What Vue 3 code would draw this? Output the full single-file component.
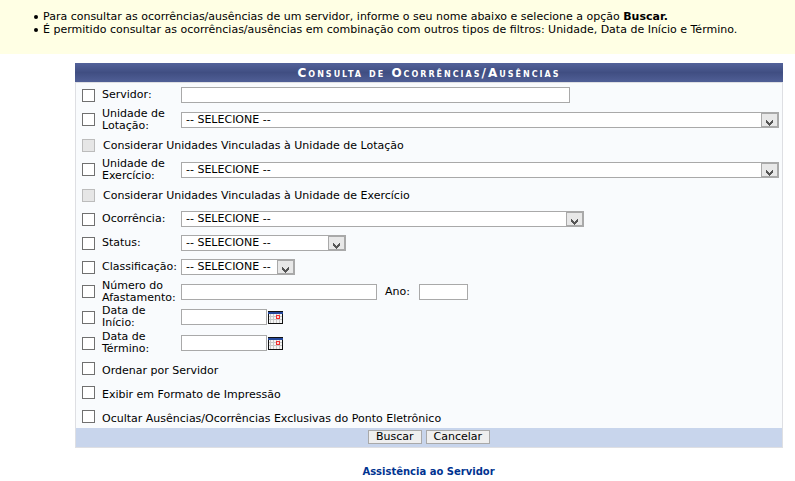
<script setup>
import { reactive } from 'vue'

const form = reactive({
  servidor: '',
  lotacao: '',
  exercicio: '',
  ocorrencia: '',
  status: '',
  classificacao: '',
  numero: '',
  ano: '',
  inicio: '',
  termino: '',
})

const filtros = [
  { id: 'servidor', label: 'Servidor:', type: 'text', size: 'large' },
  { id: 'lotacao', label: 'Unidade de Lotação:', type: 'select', size: 'full', tall: true },
  { id: 'vincLotacao', label: 'Considerar Unidades Vinculadas à Unidade de Lotação', type: 'sub' },
  { id: 'exercicio', label: 'Unidade de Exercício:', type: 'select', size: 'full', tall: true },
  { id: 'vincExercicio', label: 'Considerar Unidades Vinculadas à Unidade de Exercício', type: 'sub' },
  { id: 'ocorrencia', label: 'Ocorrência:', type: 'select', size: 'wide' },
  { id: 'status', label: 'Status:', type: 'select', size: 'medium' },
  { id: 'classificacao', label: 'Classificação:', type: 'select', size: 'small' },
  { id: 'numero', label: 'Número do Afastamento:', type: 'number', size: 'number', tall: true },
  { id: 'inicio', label: 'Data de Início:', type: 'date', size: 'date' },
  { id: 'termino', label: 'Data de Término:', type: 'date', size: 'date' },
  { id: 'ordenar', label: 'Ordenar por Servidor', type: 'option' },
  { id: 'exibir', label: 'Exibir em Formato de Impressão', type: 'option' },
  { id: 'ocultar', label: 'Ocultar Ausências/Ocorrências Exclusivas do Ponto Eletrônico', type: 'option' },
]
</script>

<template>
  <div class="page">
    <div class="info">
      <ul class="info__list">
        <li>Para consultar as ocorrências/ausências de um servidor, informe o seu nome abaixo e selecione a opção <b>Buscar.</b></li>
        <li>É permitido consultar as ocorrências/ausências em combinação com outros tipos de filtros: Unidade, Data de Início e Término.</li>
      </ul>
    </div>

    <form class="panel" @submit.prevent>
      <h1 class="panel__title">Consulta de Ocorrências/Ausências</h1>
      <div class="panel__body">
        <div
          v-for="item in filtros"
          :key="item.id"
          class="row"
          :class="['row_' + item.type, { row_tall: item.tall }]"
        >
          <input :id="'check_' + item.id" type="checkbox" class="check" :disabled="item.type === 'sub'" />
          <label class="label" :for="'check_' + item.id">{{ item.label }}</label>

          <div v-if="item.type === 'select'" class="select" :class="'field_' + item.size">
            <select v-model="form[item.id]" class="select__input" :aria-label="item.label">
              <option value="">-- SELECIONE --</option>
            </select>
            <svg class="select__arrow" viewBox="0 0 18 14" shape-rendering="crispEdges">
              <rect width="18" height="14" fill="#a9a9a9" />
              <rect x="1" y="1" width="15" height="12" fill="#e8e8e8" />
              <path d="M5 7h1v1h1v1h1v1h1v-1h1v-1h1v-1h1v3h-1v1h-1v1h-1v1h-1v-1h-1v-1h-1v-1h-1z" fill="#555" />
            </svg>
          </div>

          <input
            v-else-if="['text', 'number', 'date'].includes(item.type)"
            v-model="form[item.id]"
            type="text"
            class="field"
            :class="'field_' + item.size"
            :aria-label="item.label"
          />

          <template v-if="item.type === 'number'">
            <label class="year" for="ano">Ano:</label>
            <input id="ano" v-model="form.ano" type="text" class="field field_year" />
          </template>

          <button v-if="item.type === 'date'" type="button" class="calendar" aria-label="Calendário">
            <svg width="15" height="13" viewBox="0 0 15 13" shape-rendering="crispEdges">
              <rect width="15" height="13" fill="#111" />
              <rect x="1" y="3" width="13" height="9" fill="#c8c8c8" />
              <rect y="1" width="15" height="2" fill="#24479b" />
              <path d="M1 3h1v9h-1zM3 3h2v9h-2zM6 3h2v9h-2zM9 3h2v9h-2zM12 3h2v9h-2z" fill="#f4f4f4" />
              <path d="M1 5h13v1h-13zM1 8h13v1h-13z" fill="#c8c8c8" />
              <rect x="8" y="4" width="4" height="4" fill="#f03030" />
              <rect x="9" y="5" width="2" height="2" fill="#ffd8d8" />
            </svg>
          </button>
        </div>
      </div>
      <div class="panel__footer">
        <button type="submit" class="button">Buscar</button>
        <button type="button" class="button">Cancelar</button>
      </div>
    </form>

    <div class="back">
      <a class="back__link" href="#">Assistência ao Servidor</a>
    </div>
  </div>
</template>

<style>
body {
  margin: 0;
  background: #fff;
}
</style>

<style scoped>
.page {
  font-family: Verdana, "DejaVu Sans", sans-serif;
  font-size: 11px;
  line-height: 12px;
  color: #000;
}

.info {
  padding: 10px 0 18px;
  background: #ffffe4;
}

.info__list {
  margin: 0;
  padding: 0 0 0 43px;
  line-height: 13px;
  list-style: none;
}

.info__list li::before {
  content: '';
  float: left;
  width: 4px;
  height: 4px;
  margin: 5px 0 0 -9px;
  border-radius: 50%;
  background: #000;
}

.panel {
  margin: 9px 12px 0 75px;
}

.panel__title {
  margin: 0;
  padding-top: 1px;
  background: linear-gradient(#53629a, #404e82 50%, #505f96);
  color: #fff;
  font-size: 12px;
  font-variant: small-caps;
  letter-spacing: 2px;
  line-height: 18px;
  text-align: center;
}

.panel__body {
  border: 1px solid #dedfe3;
  border-bottom: none;
  background: #f9fbfd;
}

.row {
  display: flex;
  align-items: center;
  box-sizing: border-box;
  height: 24px;
  padding: 0 3px 0 6px;
}

.row_tall {
  height: 25px;
}

.row_sub {
  height: 25px;
  padding-top: 2px;
}

.row_date {
  height: 26px;
}

.check {
  appearance: none;
  flex: none;
  box-sizing: border-box;
  width: 13px;
  height: 13px;
  margin: 0 7px 0 0;
  border: 1px solid #707070;
  background: #fff;
}

.check:checked {
  background: #404e82;
}

.check:disabled {
  border-color: #bcbcbc;
  background: #e6e6e6;
}

.label {
  flex: none;
  width: 79px;
}

.row_sub .label,
.row_option .label {
  width: auto;
}

.row_sub .label {
  padding-left: 1px;
}

.row_option .label {
  padding-top: 6px;
}

.field,
.select__input {
  box-sizing: border-box;
  height: 16px;
  margin: 0;
  padding: 0 4px;
  border: 1px solid #a9a9a9;
  border-radius: 0;
  background: #fff;
  color: #000;
  font: inherit;
}

.select {
  position: relative;
  display: flex;
}

.select__input {
  appearance: none;
  width: 100%;
}

.select__arrow {
  position: absolute;
  top: 1px;
  right: 0;
  width: 18px;
  height: 14px;
  pointer-events: none;
}

.field_large {
  width: 389px;
}

.field_full {
  flex: 1;
}

.field_wide {
  width: 403px;
}

.field_medium {
  width: 165px;
}

.field_small {
  width: 114px;
}

.field_number {
  width: 196px;
}

.field_date {
  width: 86px;
}

.field_year {
  width: 49px;
}

.year {
  width: 34px;
  padding-left: 8px;
}

.calendar {
  display: flex;
  margin: 0 0 0 1px;
  padding: 0;
  border: none;
  background: none;
  cursor: pointer;
}

.panel__footer {
  display: flex;
  justify-content: center;
  gap: 4px;
  padding: 2px 0 3px;
  border: 1px solid #dedfe3;
  border-top: none;
  background: #c8d5ec;
}

.button {
  height: 14px;
  box-sizing: border-box;
  padding: 0 7px;
  border: 1px solid #a9a9a9;
  background: #efefef;
  color: #000;
  font: inherit;
  cursor: pointer;
}

.back {
  margin-top: 18px;
  padding-left: 62px;
  text-align: center;
}

.back__link {
  color: #003390;
  font-size: 10px;
  font-weight: bold;
  text-decoration: none;
}
</style>
